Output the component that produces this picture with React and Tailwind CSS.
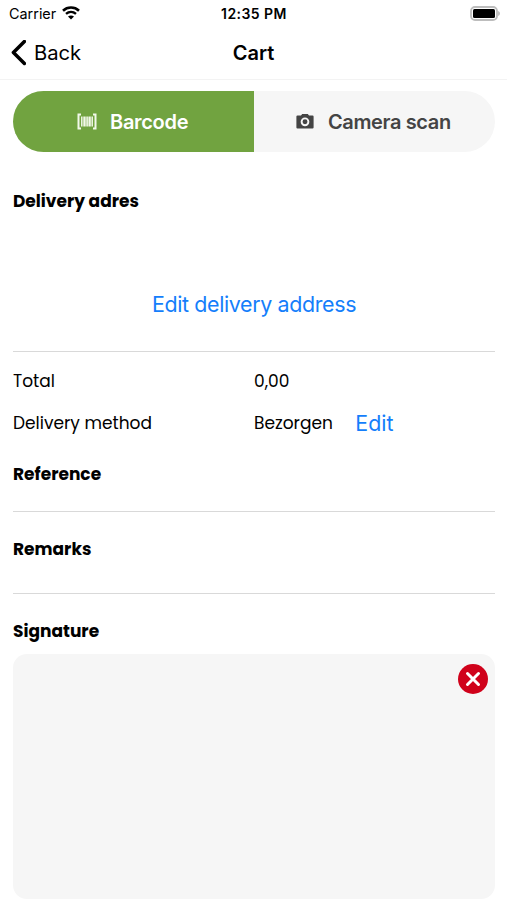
function StatusBar() {
  return (
    <div className="flex h-[27px] items-center justify-between pl-[9px] pr-[7px]">
      <div className="flex w-[199px] items-center gap-[6px]">
        <span className="text-[14.4px]">Carrier</span>
        <svg width="18" height="14" viewBox="0 0 18 14" fill="none">
          <path d="M1 4.7C5.5.5 12.5.5 17 4.7" stroke="black" strokeWidth="2.6" />
          <path d="M4 7.9c3-2.6 7-2.6 10 0" stroke="black" strokeWidth="2.4" />
          <path d="M9 13.4 6 10.5c1.7-1.4 4.3-1.4 6 0z" fill="black" />
        </svg>
      </div>
      <span className="text-[14px] font-semibold tracking-[0.45px]">12:35 PM</span>
      <div className="flex w-[200px] justify-end">
        <svg width="30" height="15" viewBox="0 0 30 15">
          <rect x="1" y="1" width="26" height="13" rx="4" fill="none" stroke="#bdbdbd" strokeWidth="1.8" />
          <rect x="3" y="3" width="22" height="9" rx="1.5" fill="black" />
          <path d="M28.2 5v5c2.2-.9 2.2-4.1 0-5z" fill="#b5b5b5" />
        </svg>
      </div>
    </div>
  );
}

function Header() {
  return (
    <header className="flex h-[53px] items-center justify-between border-b border-[#f3f3f3] px-[11px]">
      <div className="flex w-[200px] items-center gap-2 text-[20.2px]">
        <svg width="15" height="26" viewBox="0 0 15 26" fill="none">
          <path d="M13.4 1.5 2.4 12.5l11 11" stroke="black" strokeWidth="3.5" strokeLinecap="round" strokeLinejoin="round" />
        </svg>
        Back
      </div>
      <h1 className="text-[20px] font-semibold">Cart</h1>
      <div className="w-[200px]" />
    </header>
  );
}

function BarcodeIcon() {
  return (
    <svg width="20" height="18" viewBox="0 0 20 18" fill="none" stroke="#f2f8e9">
      <path d="M4 1.5H1.5v14H4M16 1.5h2.5v14H16" strokeWidth="2" />
      <path d="M4.8 3.5v10M15.2 3.5v10" strokeWidth="1.5" />
      <path d="M7.5 3.5v10M12.6 3.5v10" strokeWidth="2.4" />
      <path d="M10.1 3.5v10" strokeWidth="1.6" />
    </svg>
  );
}

function CameraIcon() {
  return (
    <svg width="18" height="17" viewBox="0 0 18 17">
      <path
        d="M1.500 2.500H5L6.200 1h5.600L13 2.500h3.500q1.100 0 1.100 1.100v10.800q0 1.100-1.100 1.100h-15q-1.100 0-1.100-1.100V3.600q0-1.100 1.100-1.100z"
        fill="#444"
      />
      <circle cx="9" cy="8.800" r="3.400" fill="none" stroke="#f6f6f6" strokeWidth="1.9" />
    </svg>
  );
}

function SectionTitle({ children }) {
  return <h2 className="text-[17px] leading-[26px] font-bold">{children}</h2>;
}

export default function App() {
  return (
    <div className="h-[900px] w-[507px] overflow-hidden bg-white font-['Inter',sans-serif] text-black">
      <StatusBar />
      <Header />

      <main className="pr-[12px] pl-[13px] font-['Poppins','Open_Sans',sans-serif]">
        <div className="mt-[11px] flex h-[61px] overflow-hidden rounded-full bg-[#f6f6f6] font-['Inter',sans-serif] text-[20px] font-semibold">
          <button className="flex w-[241px] items-center bg-[#71a340] pl-[64px] text-white">
            <BarcodeIcon />
            <span className="ml-[13px] tracking-[-0.3px]">Barcode</span>
          </button>
          <button className="flex flex-1 items-center pl-[42px] text-[#444]">
            <CameraIcon />
            <span className="ml-[14px] tracking-[-0.37px]">Camera scan</span>
          </button>
        </div>

        <section className="flex h-[200px] flex-col border-b border-[#d9d9d9] pt-[36px]">
          <SectionTitle>Delivery adres</SectionTitle>
          <button className="mt-[74px] self-center font-['Inter',sans-serif] text-[21.4px] leading-[32px] tracking-[-0.35px] text-[#147efb]">
            Edit delivery address
          </button>
        </section>

        <section className="grid grid-cols-2 pt-[8px] text-[17px]">
          <div className="flex h-[42px] items-center pt-[2px]">Total</div>
          <div className="flex h-[42px] items-center pt-[2px]">0,00</div>
          <div className="flex h-[42px] items-center pt-[2px]">Delivery method</div>
          <div className="flex h-[42px] items-center">
            <span className="pt-[2px]">Bezorgen</span>
            <button className="ml-[22.5px] font-['Inter',sans-serif] text-[21.4px] text-[#147efb]">
              Edit
            </button>
          </div>
        </section>

        <section className="h-[68px] border-b border-[#d9d9d9] pt-[17px]">
          <SectionTitle>Reference</SectionTitle>
        </section>
        <section className="h-[82px] border-b border-[#d9d9d9] pt-[24px]">
          <SectionTitle>Remarks</SectionTitle>
        </section>

        <section className="pt-[24px]">
          <SectionTitle>Signature</SectionTitle>
          <div className="mt-[10px] flex h-[245px] items-start justify-end rounded-[14px] bg-[#f6f6f6] pt-[10px] pr-[7px]">
            <button>
              <svg width="30" height="30" viewBox="0 0 30 30" className="block">
                <circle cx="15" cy="15" r="15" fill="#d0021b" />
                <path d="m9.5 9.5 11 11m0-11-11 11" stroke="white" strokeWidth="3" strokeLinecap="round" />
              </svg>
            </button>
          </div>
        </section>
      </main>
    </div>
  );
}
